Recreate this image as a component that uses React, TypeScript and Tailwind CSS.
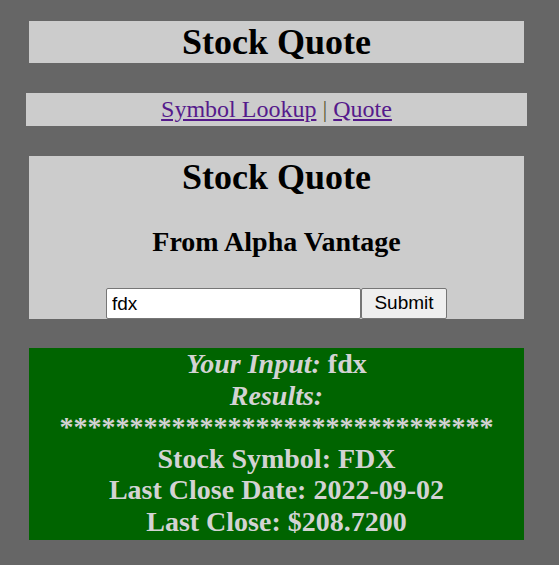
import React from "react";

const serif = { fontFamily: '"Liberation Serif", "Times New Roman", serif' };

export default function App() {
  return (
    <div className="min-h-[565px] w-[559px] bg-[#666666] pt-[21px]" style={serif}>
      <div className="ml-[29px] w-[495px] h-[42px] bg-[#cccccc] text-center">
        <h1 className="text-[36px] leading-[42px] font-bold text-black">Stock Quote</h1>
      </div>
      <div className="ml-[26px] mt-[30px] w-[501px] h-[33px] bg-[#cccccc] text-center text-[24px] leading-[33px] text-[#5e5e3a]">
        <a href="#" className="text-[#551a8b] underline">Symbol Lookup</a>
        {" | "}
        <a href="#" className="text-[#551a8b] underline">Quote</a>
      </div>
      <div className="ml-[29px] mt-[30px] w-[495px] h-[163px] bg-[#cccccc] text-center text-black">
        <h1 className="text-[36px] leading-[42px] font-bold">Stock Quote</h1>
        <h2 className="mt-[28px] text-[28px] leading-[32px] font-bold">From Alpha Vantage</h2>
        <div className="mt-[30px] flex justify-center">
          <input
            defaultValue="fdx"
            className="w-[255px] h-[31px] bg-white border border-[#767676] rounded-[2px] px-[5px] text-[19px] text-black outline-none"
            style={{ fontFamily: '"Liberation Sans", Arial, sans-serif' }}
          />
          <button
            className="w-[86px] h-[31px] bg-[#efefef] border border-[#767676] rounded-[2px] text-[19px] text-black"
            style={{ fontFamily: '"Liberation Sans", Arial, sans-serif' }}
          >
            Submit
          </button>
        </div>
      </div>
      <div className="ml-[29px] mt-[29px] w-[495px] h-[192px] bg-[#006400] text-center text-[28px] leading-[31.6px] font-bold text-[#d3d3d3]">
        <div>
          <i>Your Input:</i> fdx
        </div>
        <div>
          <i>Results:</i>
        </div>
        <div>*******************************</div>
        <div>Stock Symbol: FDX</div>
        <div>Last Close Date: 2022-09-02</div>
        <div>Last Close: $208.7200</div>
      </div>
    </div>
  );
}
